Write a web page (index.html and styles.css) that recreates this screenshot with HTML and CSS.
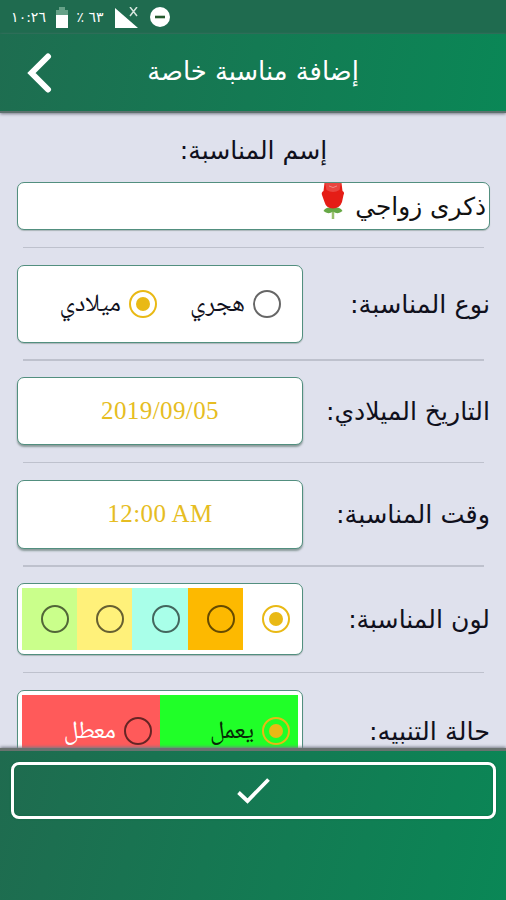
FILE: index.html
```html
<!DOCTYPE html>
<html lang="ar" dir="rtl">
<head>
<meta charset="utf-8">
<title>إضافة مناسبة خاصة</title>
<link rel="stylesheet" href="styles.css">
</head>
<body>
<div class="app">
  <div class="status">
    <span class="clock">١٠:٢٦</span>
    <svg class="battery" width="12" height="21" viewBox="0 0 12 21"><path fill="#66a188" d="M3 0h6v3h3v5H0V3h3z"/><path fill="#fff" d="M0 8h12v13H0z"/></svg>
    <span class="percent">٪ ٦٣</span>
    <svg class="signal" width="24" height="21" viewBox="0 0 24 21"><path fill="#fff" d="M0 1L23 21H0z"/><path d="M15 0l7 9M22 0l-7 9" stroke="#d5e5dd" stroke-width="1.500"/></svg>
    <svg class="dnd" width="20" height="20" viewBox="0 0 20 20"><circle cx="10" cy="10" r="10" fill="#fff"/><path d="M5 10h10" stroke="#265a2e" stroke-width="2.600"/></svg>
  </div>
  <header class="header">
    <h1 class="title">إضافة مناسبة خاصة</h1>
    <svg class="back" width="26" height="40" viewBox="0 0 26 40"><path d="M22 3.500L5.500 20L22 36.500" fill="none" stroke="#fff" stroke-width="6" stroke-linecap="round"/></svg>
  </header>
  <main class="form">
    <div class="label name-label"><span class="t-name">إسم المناسبة:</span></div>
    <div class="card name-input"><span class="t-value">ذكرى زواجي</span>
      <svg class="rose" width="24" height="37" viewBox="0 0 24 37"><path d="M12 23v13" stroke="#9ac06d" stroke-width="2.500"/><path d="M12 25Q5 23 2.500 28Q7 32 12 28.500Q17 32 21.500 28Q19 23 12 25" fill="#67a846"/><path d="M3.500 0H20.500L21.500 8Q24 9.500 22.500 12L21 19Q19 25 12 25.500Q5 25 3.500 19L1 12Q0 9.500 2.500 8z" fill="#e51d16"/><path d="M4 0H20L18.500 7Q12 11 5.500 7z" fill="#ea4540"/><path d="M8 3q4 3 8 0" fill="none" stroke="#f08a86" stroke-width="1"/></svg>
    </div>
    <hr class="rule">
    <div class="row row-type">
      <div class="label"><span class="t-type">نوع المناسبة:</span></div>
      <div class="card options">
        <div class="option first"><i class="radio"></i><span class="naskh t-hijri">هجري</span></div>
        <div class="option"><i class="radio on"></i><span class="naskh t-milad">ميلادي</span></div>
      </div>
    </div>
    <hr class="rule">
    <div class="row row-date">
      <div class="label"><span class="t-date">التاريخ الميلادي:</span></div>
      <div class="card picker date" dir="ltr">2019/09/05</div>
    </div>
    <hr class="rule">
    <div class="row row-time">
      <div class="label"><span class="t-time">وقت المناسبة:</span></div>
      <div class="card picker" dir="ltr">12:00 AM</div>
    </div>
    <hr class="rule">
    <div class="row row-color">
      <div class="label"><span class="t-color">لون المناسبة:</span></div>
      <div class="card swatches">
        <div class="swatch white"><i class="radio on"></i></div>
        <div class="swatch orange"><i class="radio"></i></div>
        <div class="swatch aqua"><i class="radio"></i></div>
        <div class="swatch yellow"><i class="radio"></i></div>
        <div class="swatch lime"><i class="radio"></i></div>
      </div>
    </div>
    <hr class="rule">
    <div class="row row-alert">
      <div class="label"><span class="t-alert">حالة التنبيه:</span></div>
      <div class="card swatches">
        <div class="state enabled"><i class="radio on"></i><span class="naskh t-on">يعمل</span></div>
        <div class="state disabled"><i class="radio"></i><span class="naskh t-off">معطل</span></div>
      </div>
    </div>
  </main>
  <footer class="footer">
    <div class="confirm"><svg width="34" height="28" viewBox="0 0 34 28"><path d="M1.500 15.500l9 8.500L31.500 2.500" fill="none" stroke="#fff" stroke-width="3.800"/></svg></div>
  </footer>
</div>
</body>
</html>
```
FILE: styles.css
```css
* { box-sizing: border-box; }
body { margin: 0; }
.app {
  width: 506px; height: 900px; overflow: hidden;
  display: flex; flex-direction: column;
  background: #dfe1ed; color: #10101c;
  font-family: "DejaVu Sans", sans-serif;
}
.status {
  height: 34px; flex: none; direction: ltr;
  display: flex; align-items: center; padding-left: 12px;
  background: #1f6b4f; color: #fff; font-size: 14px;
}
.status span { white-space: nowrap; display: flex; justify-content: center; }
.clock { width: 33px; }
.battery { margin: 0 7px 0 11px; }
.percent { width: 30px; }
.signal { margin: 0 11px 0 10px; }
.header {
  height: 79px; flex: none; direction: ltr; z-index: 1;
  display: grid; grid-template-columns: 100px 306px 100px;
  align-items: center;
  background: linear-gradient(100deg, #1e6d50, #0a8756);
  border-bottom: 2px solid #5d716e;
  box-shadow: 0 1px 3px #777b87;
}
.title {
  grid-column: 2; grid-row: 1; margin: 0; padding-bottom: 4px; direction: rtl;
  display: flex; justify-content: center; white-space: nowrap;
  font-size: 25.8px; font-weight: 400; color: #fff;
}
.back { grid-column: 1; grid-row: 1; margin-left: 26px; }
.form { height: 635px; flex: none; overflow: hidden; padding: 0 16px 0 17px; }
.label { display: flex; align-items: center; white-space: nowrap; font-size: 25.500px; }
.t-date, .t-color, .t-name { font-size: 25.100px; }
.name-label { height: 69px; justify-content: center; padding: 5px 0 0; }
.card {
  background: #fff; border: 1.5px solid #528f7f; border-radius: 7px;
  box-shadow: 0 1px 1px #aab5b8;
}
.name-input {
  height: 48px; display: flex; align-items: center; gap: 10px;
  padding-right: 3px; font-size: 24.800px; white-space: nowrap; color: #111;
}
.rose { align-self: flex-start; }
.rule { height: 1.5px; border: 0; margin: 16.500px 6px 16.500px; background: #bec1cd; }
.row { display: grid; grid-template-columns: 1fr 286px; }
.row-type { height: 78px; }
.row-date { height: 68px; }
.row-time { height: 69px; }
.row-color { height: 72px; }
.row-alert { height: 82px; }
.options { display: flex; padding: 0 21px 0 0; }
.option { display: flex; align-items: center; gap: 8px; }
.first { width: 124px; }
.radio {
  width: 28px; height: 28px; flex: none; border-radius: 50%;
  border: 2.5px solid #0009; display: grid; place-items: center;
}
.on { border-color: #e9b915; }
.on::after { content: ""; width: 14px; height: 14px; border-radius: 50%; background: #e9b915; }
.naskh {
  white-space: nowrap; font-size: 25px; line-height: 30px; padding-top: 5px;
  font-family: "Noto Naskh Arabic", "Amiri", "Noto Sans Arabic", "DejaVu Sans", serif;
}
.picker {
  display: flex; align-items: center; justify-content: center; padding-bottom: 1px;
  font: 25px "Liberation Serif", serif; letter-spacing: .4px; color: #e6bd22;
  box-shadow: 0 2px 2px #8b9b9b;
}
.date { padding-bottom: 0; }
.swatches { display: flex; padding: 4px; }
.swatch { flex: 1; display: flex; align-items: center; padding-right: 8px; }
.white { background: #fff; }
.orange { background: #fdb900; }
.aqua { background: #a9ffe9; }
.yellow { background: #fff17a; }
.lime { background: #caff8b; }
.state { flex: 1; display: flex; align-items: center; gap: 8px; padding-right: 8px; }
.enabled { background: #20ff28; color: #062a06; }
.disabled { background: #ff5a5a; color: #fff; }
.footer {
  flex: 1; padding: 11px 10px 0 11px; z-index: 1;
  border-top: 3px solid #69726f; box-shadow: 0 -1px 3px #777b87;
  background: linear-gradient(105deg, #1f6b4f, #0a8756);
}
.confirm {
  height: 57px; border: 3px solid #fff; border-radius: 8px;
  display: flex; align-items: center; justify-content: center;
  box-shadow: 0 0 2px #086640, inset 0 0 2px #086640;
}
```
